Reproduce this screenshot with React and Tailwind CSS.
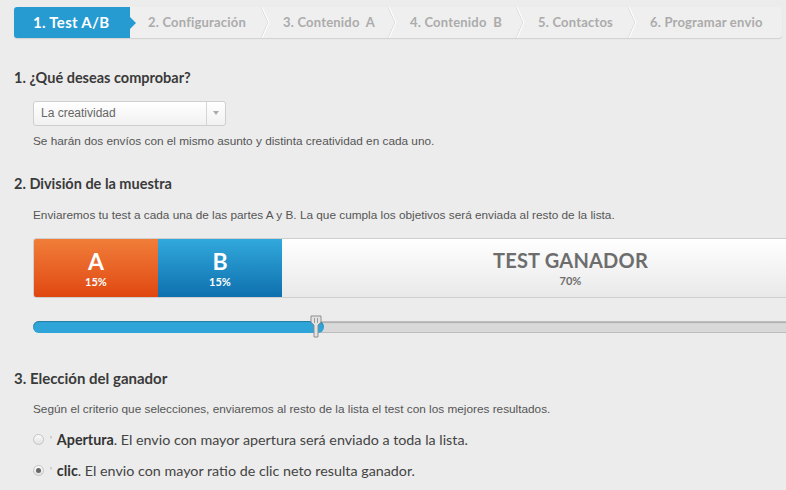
import React from "react";

const head = { fontFamily: "Lato, 'Open Sans', sans-serif" };
const body = { fontFamily: "'Liberation Sans', Arial, sans-serif" };

function Sep() {
  return (
    <svg width="10" height="31" viewBox="0 0 10 31" className="absolute right-[-5px] top-0 z-10">
      <path d="M1 0 L8 15.5 L1 31" fill="none" stroke="#dcdcdc" strokeWidth="1" />
      <path d="M2 0 L9 15.5 L2 31" fill="none" stroke="#ffffff" strokeWidth="1" />
    </svg>
  );
}

function Tab({ w, children, last }) {
  return (
    <div
      className="relative flex h-full items-center pl-[18px] text-[13px] font-bold tracking-[0.2px] text-[#ababab]"
      style={{ width: w }}
    >
      <span>{children}</span>
      {!last && <Sep />}
    </div>
  );
}

function Radio({ checked }) {
  return (
    <span className="relative inline-flex h-[11px] w-[11px] items-center justify-center rounded-full border border-[#c4c4c4] bg-gradient-to-b from-[#fafafa] to-[#e2e2e2]">
      {checked && <span className="h-[5px] w-[5px] rounded-full bg-[#666]" />}
    </span>
  );
}

export default function App() {
  return (
    <div className="h-[490px] w-[786px] overflow-hidden bg-[#ececec]" style={head}>
      {/* Tabs */}
      <div className="pl-[14px] pt-[7px]">
        <div className="flex h-[31px] w-[768px] rounded-[3px] bg-[#efefef] shadow-[0_1px_1px_rgba(0,0,0,0.12)]">
          <div className="relative flex h-full w-[116px] items-center rounded-l-[3px] bg-[#259bd2] pl-[19px] text-[15px] font-bold tracking-[0.3px] text-white">
            1. Test A/B
            <span className="absolute right-[-6px] top-[10px] h-0 w-0 border-y-[6px] border-l-[6px] border-y-transparent border-l-[#259bd2]" />
          </div>
          <Tab w={135}>2. Configuración</Tab>
          <Tab w={127}>3. Contenido&nbsp; A</Tab>
          <Tab w={128}>4. Contenido&nbsp; B</Tab>
          <Tab w={112}>5. Contactos</Tab>
          <Tab w={150} last>6. Programar envio</Tab>
        </div>
      </div>

      {/* Section 1 */}
      <div className="pl-[14px] pt-[29px] text-[14.5px] font-bold text-[#3a3a3a]">1. ¿Qué deseas comprobar?</div>
      <div className="pl-[33px] pt-[12px]">
        <div className="flex h-[25px] w-[193px] items-center rounded-[3px] border border-[#cfcfcf] bg-gradient-to-b from-white to-[#f1f1f1]">
          <span className="flex-1 pl-[7px] text-[12px] text-[#666]" style={body}>La creatividad</span>
          <span className="flex h-full w-[19px] items-center justify-center border-l border-[#d6d6d6]">
            <span className="h-0 w-0 border-x-[3px] border-t-[4px] border-x-transparent border-t-[#aaa]" />
          </span>
        </div>
      </div>
      <div className="pl-[33px] pt-[7px] text-[11.8px] text-[#555]" style={body}>
        Se harán dos envíos con el mismo asunto y distinta creatividad en cada uno.
      </div>

      {/* Section 2 */}
      <div className="pl-[14px] pt-[23px] text-[14.5px] font-bold text-[#3a3a3a]">2. División de la muestra</div>
      <div className="pl-[33px] pt-[12px] text-[11.8px] text-[#555]" style={body}>
        Enviaremos tu test a cada una de las partes A y B. La que cumpla los objetivos será enviada al resto de la lista.
      </div>

      <div className="pl-[33px] pt-[13px]">
        <div className="flex h-[60px] w-[827px] overflow-hidden rounded-l-[3px] border border-[#cfcfcf]">
          <div className="flex w-[124px] flex-col items-center justify-center bg-gradient-to-b from-[#f07d38] to-[#e0460f] text-white">
            <span className="text-[23px] font-bold leading-[28px]">A</span>
            <span className="text-[11px] font-bold leading-[14px]">15%</span>
          </div>
          <div className="flex w-[124px] flex-col items-center justify-center bg-gradient-to-b from-[#31a9dc] to-[#0e70ae] text-white">
            <span className="text-[23px] font-bold leading-[28px]">B</span>
            <span className="text-[11px] font-bold leading-[14px]">15%</span>
          </div>
          <div className="flex flex-1 flex-col items-center justify-center bg-gradient-to-b from-white to-[#e9e9e9] text-[#6d6d6d]">
            <span className="text-[20px] font-bold leading-[27px] tracking-[0.2px]">TEST GANADOR</span>
            <span className="text-[11px] font-bold leading-[14px]">70%</span>
          </div>
        </div>
      </div>

      {/* Slider */}
      <div className="pl-[33px] pt-[23px]">
        <div className="relative h-[12px] w-[827px]">
          <div className="absolute inset-0 rounded-full border border-[#bdbdbd] bg-[#d9d9d9] shadow-[inset_0_1px_1px_rgba(0,0,0,0.2)]" />
          <div className="absolute left-0 top-0 h-[12px] w-[291px] rounded-full bg-[#2fa4d8] shadow-[inset_0_1px_1px_rgba(0,0,0,0.25)]" />
          <svg width="14" height="24" viewBox="0 0 14 24" className="absolute left-[276px] top-[-6px]">
            <path d="M2 1 H12 V7 L9 10 V22 H5 V10 L2 7 Z" fill="#e3e3e3" stroke="#8d8d8d" strokeWidth="1" />
            <path d="M5.5 3 V8 M8.5 3 V8" stroke="#9a9a9a" strokeWidth="1" />
          </svg>
        </div>
      </div>

      {/* Section 3 */}
      <div className="pl-[14px] pt-[34px] text-[15px] font-bold text-[#3a3a3a]">3. Elección del ganador</div>
      <div className="pl-[33px] pt-[12px] text-[11.8px] text-[#555]" style={body}>
        Según el criterio que selecciones, enviaremos al resto de la lista el test con los mejores resultados.
      </div>
      <div className="flex items-center pl-[33px] pt-[10px] text-[14.3px] text-[#444]">
        <Radio />
        <span className="ml-[6px] mr-[5px] text-[9px] leading-none text-[#999]">'</span>
        <span className="font-bold text-[#333]">Apertura</span>
        <span>. El envio con mayor apertura será enviado a toda la lista.</span>
      </div>
      <div className="flex items-center pl-[33px] pt-[9px] text-[14.3px] text-[#444]">
        <Radio checked />
        <span className="ml-[6px] mr-[5px] text-[9px] leading-none text-[#999]">'</span>
        <span className="font-bold text-[#333]">clic</span>
        <span>. El envio con mayor ratio de clic neto resulta ganador.</span>
      </div>
    </div>
  );
}
